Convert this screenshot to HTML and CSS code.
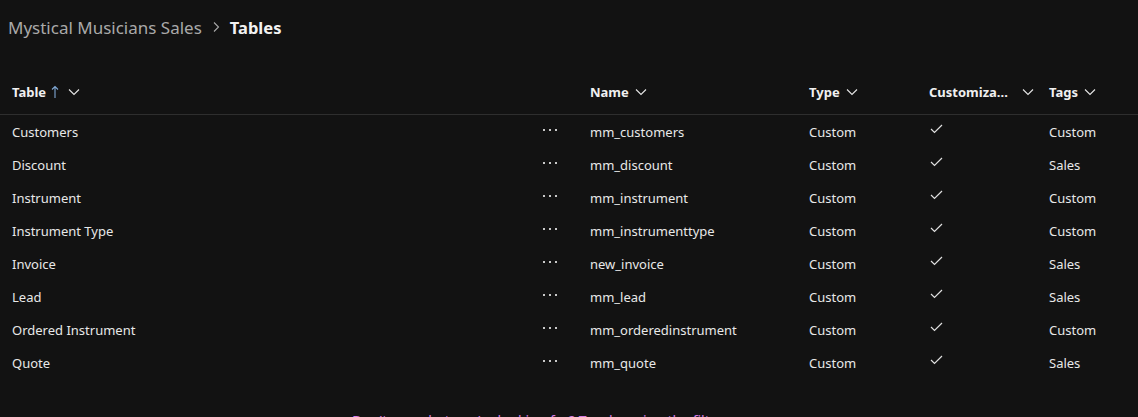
FILE: index.html
```html
<!DOCTYPE html>
<html>
<head>
<meta charset="utf-8">
<link rel="stylesheet" href="styles.css">
</head>
<body>
<div class="page">
  <div class="crumbs">
    <span class="crumb">Mystical Musicians Sales</span>
    <svg class="crumb-sep" width="12" height="12" viewBox="0 0 12 12"><path d="M4 1.5 L8.5 6 L4 10.5" fill="none" stroke="#a8a8a8" stroke-width="1.1"/></svg>
    <span class="crumb-current">Tables</span>
  </div>

  <div class="grid head">
    <div class="hcell">Table<svg class="sort" width="8" height="14" viewBox="0 0 8 14"><path d="M4 13 V1.5 M1 4.5 L4 1.5 L7 4.5" fill="none" stroke="#7fa7d4" stroke-width="1.1"/></svg><svg class="chev" width="12" height="12" viewBox="0 0 12 12"><path d="M1 3.5 L6 8.5 L11 3.5" fill="none" stroke="#e6e6e6" stroke-width="1.1"/></svg></div>
    <div></div>
    <div class="hcell">Name<svg class="chev" width="12" height="12" viewBox="0 0 12 12"><path d="M1 3.5 L6 8.5 L11 3.5" fill="none" stroke="#e6e6e6" stroke-width="1.1"/></svg></div>
    <div class="hcell">Type<svg class="chev" width="12" height="12" viewBox="0 0 12 12"><path d="M1 3.5 L6 8.5 L11 3.5" fill="none" stroke="#e6e6e6" stroke-width="1.1"/></svg></div>
    <div class="hcell wide">Customiza...<svg class="chev far" width="12" height="12" viewBox="0 0 12 12"><path d="M1 3.5 L6 8.5 L11 3.5" fill="none" stroke="#e6e6e6" stroke-width="1.1"/></svg></div>
    <div class="hcell">Tags<svg class="chev" width="12" height="12" viewBox="0 0 12 12"><path d="M1 3.5 L6 8.5 L11 3.5" fill="none" stroke="#e6e6e6" stroke-width="1.1"/></svg></div>
  </div>

  <div class="rows" id="rows"></div>

  <div class="footer">Don't see what you're looking for? Try changing the filters.</div>
</div>
<script src="app.js"></script>
</body>
</html>
```

FILE: app.js
```js
const data = [
  ["Customers", "mm_customers", "Custom", "Custom"],
  ["Discount", "mm_discount", "Custom", "Sales"],
  ["Instrument", "mm_instrument", "Custom", "Custom"],
  ["Instrument Type", "mm_instrumenttype", "Custom", "Custom"],
  ["Invoice", "new_invoice", "Custom", "Sales"],
  ["Lead", "mm_lead", "Custom", "Sales"],
  ["Ordered Instrument", "mm_orderedinstrument", "Custom", "Custom"],
  ["Quote", "mm_quote", "Custom", "Sales"]
];
const rows = document.getElementById("rows");
for (const [t, n, ty, tag] of data) {
  const r = document.createElement("div");
  r.className = "grid row";
  r.innerHTML =
    '<div class="cell">' + t + '</div>' +
    '<div class="cell dots"><span></span><span></span><span></span></div>' +
    '<div class="cell">' + n + '</div>' +
    '<div class="cell">' + ty + '</div>' +
    '<div class="cell check"><svg width="13" height="10" viewBox="0 0 13 10"><path d="M1 5 L4.5 8.5 L12 1" fill="none" stroke="#e0e0e0" stroke-width="1.2"/></svg></div>' +
    '<div class="cell">' + tag + '</div>';
  rows.appendChild(r);
}
```

FILE: styles.css
```css
html, body {
  margin: 0;
  padding: 0;
  background: #121212;
  height: 100%;
  overflow: hidden;
}
body {
  font-family: "Noto Sans", "Open Sans", sans-serif;
  color: #e6e6e6;
  font-size: 14px;
}
.page {
  display: flex;
  flex-direction: column;
}
.crumbs {
  display: flex;
  align-items: center;
  height: 54px;
  padding-left: 8px;
  gap: 8px;
}
.crumb {
  font-size: 17px;
  color: #a9a9a9;
}
.crumb-current {
  font-size: 16.5px;
  font-weight: 700;
  color: #f2f2f2;
}
.grid {
  display: grid;
  grid-template-columns: 518px 60px 219px 120px 120px 1fr;
  padding-left: 12px;
}
.head {
  margin-top: 15px;
  height: 45px;
  align-items: center;
  border-bottom: 1px solid #2e2e2e;
}
.hcell {
  display: flex;
  align-items: center;
  font-size: 13px;
  font-weight: 700;
  color: #f0f0f0;
}
.hcell .chev { margin-left: 6px; }
.hcell .chev.far { margin-left: 14px; }
.hcell .sort {
  margin-left: 5px;
  margin-right: 3px;
}
.row {
  height: 33px;
  align-items: center;
}
.cell {
  display: flex;
  align-items: center;
  font-size: 13px;
  color: #e8e8e8;
}
.dots {
  padding-left: 13px;
  gap: 4px;
  margin-top: -4px;
}
.dots span {
  width: 2px;
  height: 2px;
  background: #c8c8c8;
}
.check {
  padding-left: 1px;
  margin-top: -6px;
}
.footer {
  margin-top: 32px;
  padding-left: 352px;
  color: #d47be3;
  font-size: 14px;
}
```
